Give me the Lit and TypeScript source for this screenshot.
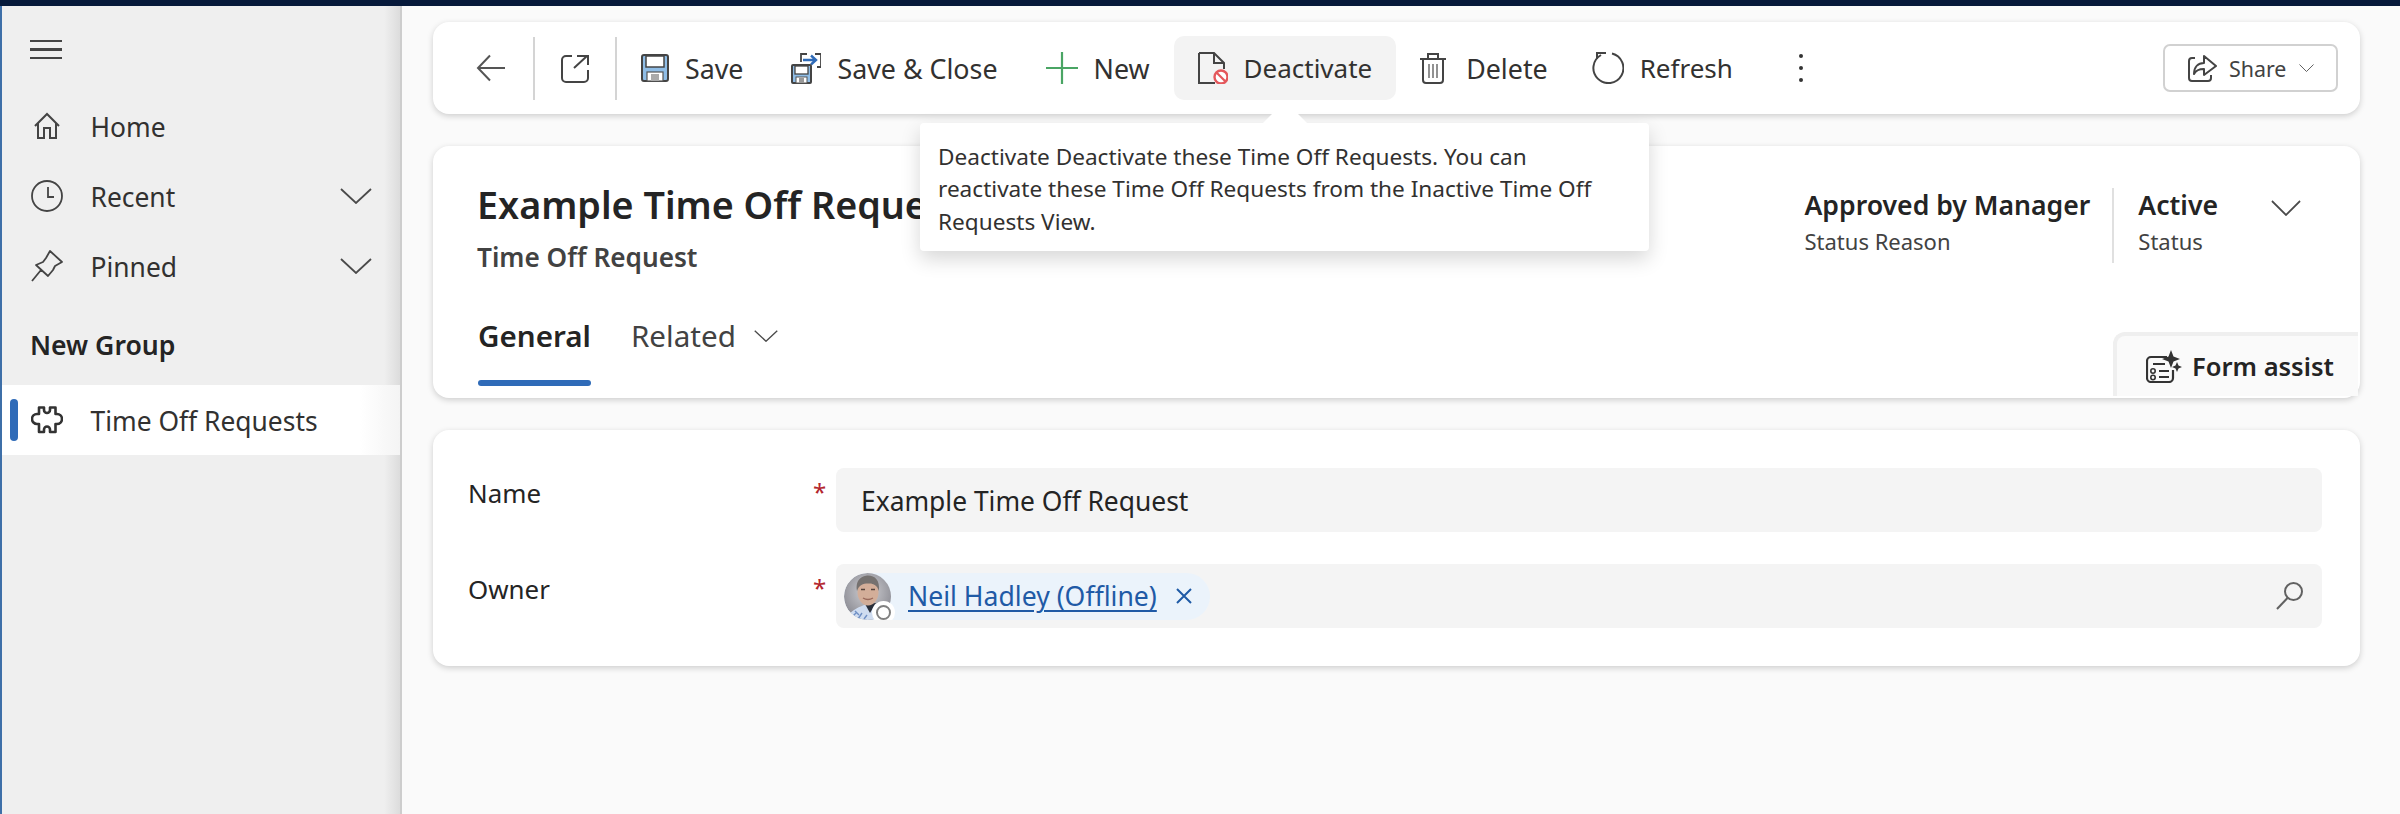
import { LitElement, html, css, svg } from 'lit';
import { customElement } from 'lit/decorators.js';

const chevron = (w: number, h: number) => html`<svg class="chev" width=${w} height=${h} viewBox="0 0 32 16" preserveAspectRatio="none" fill="none" stroke="#4a4a4a" stroke-width="1.8"><path d="M1 1 L16 15 L31 1" /></svg>`;

const icons = {
  home: svg`<path d="M2 14 L14 2 L26 14 M5 11 V26 H11 V16 H17 V26 H23 V11" fill="none" stroke="#444" stroke-width="2"/>`,
  clock: svg`<circle cx="16" cy="16" r="15" fill="none" stroke="#444" stroke-width="1.8"/><path d="M17 7 V17 H23" fill="none" stroke="#444" stroke-width="1.8"/>`,
  pin: svg`<path d="M19 1 L31 12 L24 16 L22 20 L17 26 L5 15 L12 12 L15 8 Z M10 20 L1 31" fill="none" stroke="#444" stroke-width="1.8" stroke-linejoin="round"/>`,
  puzzle: svg`<path d="M8 1.5 H13 V4 a3 3 0 0 0 6 0 V1.5 H24.5 V8 H26 a5 5 0 0 1 0 10 H24.5 V26 H19 V23.5 a3 3 0 0 0 -6 0 V26 H8 V18 H6 a5 5 0 0 1 0 -10 H8 Z" fill="none" stroke="#333" stroke-width="2.6" stroke-linejoin="round"/>`,
  back: svg`<path d="M29 14 H2 M14 1.5 L2 14 L14 26.5" fill="none" stroke="#555" stroke-width="2"/>`,
  open: svg`<path d="M11 2 H5 a4 4 0 0 0 -4 4 V24 a4 4 0 0 0 4 4 H23 a4 4 0 0 0 4 -4 V16 M13 14 L26 2 M16 2 H27 V11" fill="none" stroke="#444" stroke-width="2"/>`,
  save: svg`<rect x="1" y="1" width="26" height="26" rx="2" fill="#8fbde6" stroke="#444" stroke-width="2"/><rect x="5" y="2" width="18" height="11" fill="#fff" stroke="#444" stroke-width="1.5"/><rect x="6" y="18" width="16" height="9" fill="#fff" stroke="#555" stroke-width="1.2"/><rect x="10" y="20" width="8" height="7" fill="#aaa"/>`,
  saveClose: svg`<path d="M10 10 V2 H16 M24 2 H30 V15 H26" fill="none" stroke="#444" stroke-width="1.8"/><path d="M12 8 H24 M20 3.5 L25 8 L20 12.5" fill="none" stroke="#2f6bb8" stroke-width="2.4"/><rect x="1" y="13" width="19" height="18" rx="1" fill="#8fbde6" stroke="#444" stroke-width="2"/><rect x="4" y="14" width="13" height="8" fill="#fff" stroke="#444" stroke-width="1.3"/><rect x="5" y="25" width="11" height="6" fill="#fff" stroke="#555"/><rect x="8" y="26" width="5" height="5" fill="#999"/>`,
  plus: svg`<path d="M16 0 V32 M0 16 H32" stroke="#4aa564" stroke-width="2.2"/>`,
  deactivate: svg`<path d="M1 1 H16 L26 11 V17 M16 1 V11 H26 M17 31 H1 V1" fill="none" stroke="#444" stroke-width="2"/><circle cx="23" cy="25" r="6.5" fill="#fff" stroke="#e4585c" stroke-width="2.4"/><path d="M18.5 20.5 L27.5 29.5" stroke="#e4585c" stroke-width="2.2"/>`,
  trash: svg`<path d="M0 7 H26 M8 7 V2 H18 V7 M3 7 V28 a3 3 0 0 0 3 3 H20 a3 3 0 0 0 3 -3 V7" fill="none" stroke="#444" stroke-width="2"/><path d="M9 12 V26 M13 12 V26 M17 12 V26" stroke="#777" stroke-width="1.6"/>`,
  refresh: svg`<path d="M20 1.5 A15 15 0 1 1 9 3" fill="none" stroke="#444" stroke-width="2"/><path d="M14 1 H5 V7" fill="none" stroke="#444" stroke-width="2"/>`,
  share: svg`<path d="M8 4 H5 a3 3 0 0 0 -3 3 V24 a3 3 0 0 0 3 3 H21 a3 3 0 0 0 3 -3 V21" fill="none" stroke="#444" stroke-width="2"/><path d="M7 20 C7 13 11 9 17 9 V2 L29 12 L17 21 V15 C13 15 9 16 7 20 Z" fill="none" stroke="#444" stroke-width="2" stroke-linejoin="round"/>`,
  assist: svg`<path d="M21 7 H5 a4 4 0 0 0 -4 4 V28 a4 4 0 0 0 4 4 H23 a4 4 0 0 0 4 -4 V20" fill="none" stroke="#333" stroke-width="2.2"/><path d="M7 14 H19 M13 21 H23 M13 27 H23" stroke="#333" stroke-width="2"/><circle cx="7" cy="21" r="2.2" fill="none" stroke="#333" stroke-width="1.6"/><circle cx="7" cy="27.5" r="2.2" fill="none" stroke="#333" stroke-width="1.6"/><path d="M25 0 L27.5 6.5 L34 9 L27.5 11.5 L25 18 L22.5 11.5 L16 9 L22.5 6.5 Z M31 12 L32.5 15.5 L36 17 L32.5 18.5 L31 22 L29.5 18.5 L26 17 L29.5 15.5 Z" fill="#333"/>`,
  search: svg`<circle cx="17.5" cy="9.5" r="8.5" fill="none" stroke="#616161" stroke-width="2"/><path d="M11.5 16 L1 27" stroke="#616161" stroke-width="2"/>`,
};

const commands = [
  { label: 'Save', icon: icons.save, w: 28, h: 28, cls: '' },
  { label: 'Save & Close', icon: icons.saveClose, w: 30, h: 32, cls: '' },
  { label: 'New', icon: icons.plus, w: 32, h: 32, cls: '' },
  { label: 'Deactivate', icon: icons.deactivate, w: 30, h: 32, cls: 'hover tight' },
  { label: 'Delete', icon: icons.trash, w: 26, h: 32, cls: 'del' },
  { label: 'Refresh', icon: icons.refresh, w: 32, h: 32, cls: 'tight' },
];

const ico = (body: unknown, w: number, h: number) =>
  html`<svg width=${w} height=${h} viewBox="0 0 ${w} ${h}">${body}</svg>`;

@customElement('app-root')
export class AppRoot extends LitElement {
  static styles = css`
    :host {
      display: block;
      width: 2400px;
      height: 814px;
      overflow: hidden;
      font-family: 'Noto Sans', 'Open Sans', sans-serif;
      font-size: 26.4px;
      color: #242424;
      background: #fafafa;
    }
    .topbar {
      height: 6px;
      background: #06193a;
    }
    .shell {
      display: flex;
      height: 808px;
    }
    svg {
      display: block;
      flex: none;
    }

    /* left nav */
    .nav {
      width: 398px;
      flex: none;
      border-left: 2px solid #3e6fa8;
      border-right: 2px solid #cdcdcd;
      background: linear-gradient(to right, #efefef 96%, #dcdcdc 100%);
    }
    .burger {
      display: flex;
      flex-direction: column;
      gap: 6px;
      width: 32px;
      padding: 34px 0 32px 28px;
    }
    .burger span {
      height: 2.4px;
      background: #444;
    }
    .row {
      display: flex;
      align-items: center;
      height: 70px;
      padding: 0 28px 0 29px;
      color: #323130;
    }
    .row .icon {
      width: 32px;
      margin-right: 27.5px;
      display: flex;
      justify-content: center;
      flex: none;
    }
    .row .lab {
      padding-top: 2px;
    }
    .row .chev {
      margin-left: auto;
    }
    .group {
      font-weight: 600;
      font-size: 26.6px;
      padding-left: 28px;
      height: 84px;
      line-height: 88px;
      color: #242424;
    }
    .row.selected {
      padding-left: 8px;
      background: linear-gradient(to right, #fff 90%, #f4f4f4 100%);
    }
    .bar {
      width: 8px;
      height: 42px;
      border-radius: 4px;
      background: #2f6bb8;
      margin-right: 13px;
      flex: none;
    }

    /* main column */
    .main {
      flex: 1;
      position: relative;
      padding: 16px 40px 0 31px;
      min-width: 0;
    }
    .card {
      background: #fff;
      border-radius: 16px;
      box-shadow: 0 2px 6px rgba(0, 0, 0, 0.18);
    }

    /* command bar */
    .cmdbar {
      display: flex;
      align-items: center;
      height: 92px;
      padding-left: 43px;
      padding-right: 22px;
      box-sizing: border-box;
      font-size: 26.8px;
    }
    .sep {
      width: 2px;
      height: 63px;
      background: #d4d4d4;
      flex: none;
    }
    .iconbtn {
      display: flex;
    }
    .iconbtn.back {
      padding-right: 27px;
    }
    .iconbtn.open {
      padding: 0 26px;
    }
    .cmd {
      display: flex;
      align-items: center;
      gap: 16px;
      height: 64px;
      padding: 0 24px;
      border-radius: 10px;
      white-space: nowrap;
      color: #323130;
    }
    .cmd.tight {
      font-size: 26px;
    }
    .cmd.del {
      gap: 20px;
      padding-right: 20px;
    }
    .cmd.hover {
      background: #f3f3f3;
    }
    .more {
      display: flex;
      flex-direction: column;
      gap: 8px;
      margin-left: 42px;
    }
    .more span {
      width: 4px;
      height: 4px;
      border-radius: 50%;
      background: #333;
    }
    .share {
      margin-left: auto;
      display: flex;
      align-items: center;
      width: 175px;
      height: 48px;
      box-sizing: border-box;
      border: 2px solid #d1d1d1;
      border-radius: 7px;
      padding-left: 22px;
      font-size: 21.4px;
      color: #424242;
    }
    .share .txt {
      margin: 0 13px 0 12px;
    }

    /* record header */
    .header {
      margin-top: 32px;
      height: 252px;
      display: flex;
      flex-direction: column;
    }
    .head {
      display: flex;
      justify-content: space-between;
      padding: 34px 59px 0 44px;
    }
    .title {
      font-size: 37.7px;
      font-weight: 600;
      line-height: 50px;
      white-space: nowrap;
    }
    .subtitle {
      margin-top: 9px;
      line-height: 36px;
      font-size: 26.2px;
      font-weight: 600;
      color: #424242;
    }
    .stats {
      display: flex;
      margin-top: 8px;
    }
    .stat {
      height: 75px;
    }
    .stat .v {
      font-weight: 600;
      font-size: 26.6px;
      line-height: 34px;
      white-space: nowrap;
    }
    .stat .k {
      font-size: 22px;
      line-height: 34px;
      margin-top: 2px;
      color: #424242;
    }
    .stat.status {
      border-left: 2px solid #e0e0e0;
      margin-left: 22px;
      padding-left: 24px;
      display: flex;
      gap: 53px;
    }
    .stat.status .chev {
      margin-top: 12px;
    }
    .tabs {
      margin-top: auto;
      display: flex;
      align-items: flex-end;
      padding-left: 45px;
      font-size: 29.6px;
    }
    .tab {
      display: flex;
      flex-direction: column;
      padding-bottom: 12px;
    }
    .tab .t {
      line-height: 40px;
      margin-bottom: 24px;
      display: flex;
      align-items: center;
      gap: 18px;
    }
    .tab.on {
      font-weight: 600;
      margin-right: 40px;
    }
    .tab .ul {
      height: 6px;
      border-radius: 3px;
      background: #2f6bb8;
    }
    .tab.off {
      color: #424242;
      padding-bottom: 18px;
    }
    .assist {
      margin: 0 2px 2px auto;
      display: flex;
      align-items: center;
      gap: 10px;
      width: 245px;
      height: 64px;
      box-sizing: border-box;
      border: 4px solid #efefef;
      border-width: 4px 0 0 4px;
      border-top-left-radius: 12px;
      padding-left: 29px;
      background: #fafafa;
      font-size: 25.5px;
      font-weight: 600;
    }

    /* form */
    .form {
      margin-top: 32px;
      height: 236px;
      box-sizing: border-box;
      padding: 38px 38px 38px 35px;
      display: grid;
      grid-template-columns: 345px 23px 1fr;
      grid-auto-rows: 64px;
      row-gap: 32px;
    }
    .lbl {
      line-height: 50px;
      font-size: 25.9px;
      color: #242424;
    }
    .req {
      line-height: 48px;
      color: #b3262d;
      font-size: 24px;
    }
    .inp {
      background: #f4f4f4;
      border-radius: 8px;
      display: flex;
      align-items: center;
      padding: 2px 0 0 25px;
    }
    .inp.owner {
      padding: 0 18px 0 8px;
    }
    .chip {
      display: flex;
      align-items: center;
      height: 47px;
      width: 366px;
      border-radius: 24px;
      background: #ebf3fb;
      overflow: hidden;
    }
    .avatar {
      position: relative;
      width: 47px;
      height: 47px;
      flex: none;
      margin-right: 17px;
    }
    .presence {
      position: absolute;
      right: -4px;
      bottom: -4px;
      width: 23px;
      height: 23px;
      box-sizing: border-box;
      border-radius: 50%;
      background: #fff;
      display: flex;
      align-items: center;
      justify-content: center;
    }
    .presence i {
      display: block;
      width: 15px;
      height: 15px;
      box-sizing: border-box;
      border: 2.5px solid #808080;
      border-radius: 50%;
    }
    .chip a {
      color: #1f5aa6;
      font-size: 26.6px;
      text-decoration: underline;
      text-decoration-thickness: 2px;
      text-underline-offset: 4px;
      white-space: nowrap;
    }
    .chip .x {
      margin-left: 19px;
    }
    .inp .mag {
      margin-left: auto;
    }

    /* tooltip over the page */
    .tip {
      position: absolute;
      left: 518px;
      top: 117px;
      width: 729px;
      height: 128px;
      box-sizing: border-box;
      padding: 18px;
      background: #fff;
      border-radius: 4px;
      box-shadow: 0 8px 20px rgba(0, 0, 0, 0.16);
      font-size: 22.6px;
      line-height: 32.4px;
      color: #323130;
    }
    .tip::before {
      content: '';
      position: absolute;
      left: 343px;
      top: -22px;
      border-left: 22px solid transparent;
      border-right: 22px solid transparent;
      border-bottom: 22px solid #fff;
    }
  `;

  render() {
    return html`
      <div class="topbar"></div>
      <div class="shell">
        <nav class="nav">
          <div class="burger"><span></span><span></span><span></span></div>
          <div class="row"><span class="icon">${ico(icons.home, 28, 28)}</span><span class="lab">Home</span></div>
          <div class="row"><span class="icon">${ico(icons.clock, 32, 32)}</span><span class="lab">Recent</span>${chevron(32, 16)}</div>
          <div class="row"><span class="icon">${ico(icons.pin, 32, 32)}</span><span class="lab">Pinned</span>${chevron(32, 16)}</div>
          <div class="group">New Group</div>
          <div class="row selected"><span class="bar"></span><span class="icon">${ico(icons.puzzle, 32, 28)}</span><span class="lab">Time Off Requests</span></div>
        </nav>

        <main class="main">
          <div class="card cmdbar">
            <span class="iconbtn back">${ico(icons.back, 30, 28)}</span>
            <span class="sep"></span>
            <span class="iconbtn open">${ico(icons.open, 28, 29)}</span>
            <span class="sep"></span>
            ${commands.map(
              (c) => html`<div class="cmd ${c.cls}">${ico(c.icon, c.w, c.h)}<span>${c.label}</span></div>`
            )}
            <div class="more"><span></span><span></span><span></span></div>
            <div class="share">
              ${ico(icons.share, 30, 28)}<span class="txt">Share</span>${chevron(15, 8)}
            </div>
          </div>

          <div class="card header">
            <div class="head">
              <div>
                <div class="title">Example Time Off Request</div>
                <div class="subtitle">Time Off Request</div>
              </div>
              <div class="stats">
                <div class="stat">
                  <div class="v">Approved by Manager</div>
                  <div class="k">Status Reason</div>
                </div>
                <div class="stat status">
                  <div>
                    <div class="v">Active</div>
                    <div class="k">Status</div>
                  </div>
                  ${chevron(30, 16)}
                </div>
              </div>
            </div>
            <div class="tabs">
              <div class="tab on"><span class="t">General</span><span class="ul"></span></div>
              <div class="tab off"><span class="t">Related ${chevron(24, 12)}</span></div>
              <div class="assist">${ico(icons.assist, 36, 33)}<span>Form assist</span></div>
            </div>
          </div>

          <div class="card form">
            <div class="lbl">Name</div>
            <div class="req">*</div>
            <div class="inp">Example Time Off Request</div>
            <div class="lbl">Owner</div>
            <div class="req">*</div>
            <div class="inp owner">
              <div class="chip">
                <div class="avatar">
                  <svg width="47" height="47" viewBox="0 0 47 47">
                    <defs>
                      <radialGradient id="bg" cx="50%" cy="40%" r="65%">
                        <stop offset="0%" stop-color="#d2d2d6" />
                        <stop offset="100%" stop-color="#85858d" />
                      </radialGradient>
                      <clipPath id="round"><circle cx="23.5" cy="23.5" r="23.5" /></clipPath>
                    </defs>
                    <g clip-path="url(#round)">
                      <rect width="47" height="47" fill="url(#bg)" />
                      <path d="M3 47 C5 38 13 35 20 32 L30 31 C38 34 44 38 46 47 Z" fill="#cfdcf0" />
                      <path d="M8 44 L12 40 M14 46 L18 40 M20 46 L23 42 M30 44 L34 40 M11 38 L15 42" stroke="#6f8fc4" stroke-width="1.4" />
                      <path d="M21 31 L26 40 L32 30 Z" fill="#2a2f3a" />
                      <ellipse cx="24" cy="19" rx="10.5" ry="13.5" fill="#d3ae99" />
                      <path d="M13 18 C11 6 19 2.5 24 2.5 C31 2.5 36 7 35 18 C33 12 29 10 24 10.5 C19 10.5 15 12 13 18 Z" fill="#75716f" />
                      <path d="M17 16.5 H21 M27 16.5 H31" stroke="#54433c" stroke-width="1.6" />
                      <path d="M19 25 Q24 28 29 25" fill="none" stroke="#9a6a5c" stroke-width="1.4" />
                    </g>
                  </svg>
                  <span class="presence"><i></i></span>
                </div>
                <a>Neil Hadley (Offline)</a>
                <svg class="x" width="16" height="16" viewBox="0 0 16 16"><path d="M1 1 L15 15 M15 1 L1 15" stroke="#1f5aa6" stroke-width="2" /></svg>
              </div>
              <svg class="mag" width="28" height="28" viewBox="0 0 28 28">${icons.search}</svg>
            </div>
          </div>

          <div class="tip">Deactivate Deactivate these Time Off Requests. You can reactivate these Time Off Requests from the Inactive Time Off Requests View.</div>
        </main>
      </div>
    `;
  }
}
